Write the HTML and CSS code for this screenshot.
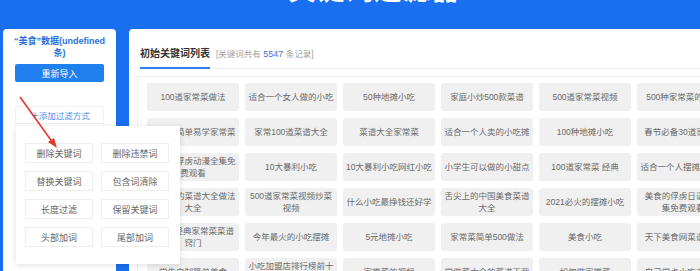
FILE: index.html
```html
<!DOCTYPE html>
<html lang="zh-CN">
<head>
<meta charset="utf-8">
<title>关键词过滤器</title>
<link rel="stylesheet" href="styles.css">
</head>
<body>
<header class="header">
  <h1 class="title">关键词过滤器</h1>
</header>
<main class="main">
  <aside class="side">
    <div class="data-name">“美食”数据(undefined<br>条)</div>
    <button class="btn-primary">重新导入</button>
    <div class="add-filter"><span class="plus">+</span> 添加过滤方式</div>
    <div class="menu">
      <div class="menu-item">删除关键词</div>
      <div class="menu-item">删除违禁词</div>
      <div class="menu-item">替换关键词</div>
      <div class="menu-item">包含词清除</div>
      <div class="menu-item">长度过滤</div>
      <div class="menu-item">保留关键词</div>
      <div class="menu-item">头部加词</div>
      <div class="menu-item">尾部加词</div>
    </div>
    <svg class="arrow" width="60" height="60" viewBox="0 0 60 60">
      <line x1="14" y1="0" x2="47" y2="46" stroke="#e8352b" stroke-width="1.6"/>
      <polygon points="51,51 42,45 48,41" fill="#e8352b"/>
    </svg>
  </aside>
  <section class="content">
    <div class="tabs">
      <div class="tab">初始关键词列表</div>
      <div class="count">[关键词共有 <span class="num">5547</span> 条记录]</div>
    </div>
    <div class="tag-box">
      <div class="tag">100道家常菜做法</div>
      <div class="tag">适合一个女人做的小吃</div>
      <div class="tag">50种地摊小吃</div>
      <div class="tag">家庭小炒500款菜谱</div>
      <div class="tag">500道家常菜视频</div>
      <div class="tag">500种家常菜的做法</div>

      <div class="tag">零基础简单易学家常菜</div>
      <div class="tag">家常100道菜谱大全</div>
      <div class="tag">菜谱大全家常菜</div>
      <div class="tag">适合一个人卖的小吃摊</div>
      <div class="tag">100种地摊小吃</div>
      <div class="tag">春节必备30道家常菜</div>

      <div class="tag">美食的俘虏动漫全集免<br>费观看</div>
      <div class="tag">10大暴利小吃</div>
      <div class="tag">10大暴利小吃网红小吃</div>
      <div class="tag">小学生可以做的小甜点</div>
      <div class="tag">100道家常菜 经典</div>
      <div class="tag">适合一个人摆摊的小吃</div>

      <div class="tag">家常菜的菜谱大全做法<br>大全</div>
      <div class="tag">500道家常菜视频炒菜<br>视频</div>
      <div class="tag">什么小吃最挣钱还好学</div>
      <div class="tag">舌尖上的中国美食菜谱<br>大全</div>
      <div class="tag">2021必火的摆摊小吃</div>
      <div class="tag">美食的俘虏日语版全<br>集免费观看</div>

      <div class="tag">100道经典家常菜菜谱<br>窍门</div>
      <div class="tag">今年最火的小吃摆摊</div>
      <div class="tag">5元地摊小吃</div>
      <div class="tag">家常菜简单500做法</div>
      <div class="tag">美食小吃</div>
      <div class="tag">天下美食网菜谱大全</div>

      <div class="tag">学生自制简单美食</div>
      <div class="tag">小吃加盟店排行榜前十<br>名</div>
      <div class="tag">家常菜的视频</div>
      <div class="tag">学做菜大全的菜谱下载</div>
      <div class="tag">如何做家常菜</div>
      <div class="tag">自己学点小吃去摆摊</div>
    </div>
  </section>
</main>
</body>
</html>
```
FILE: styles.css
```css
* { box-sizing: border-box; }
html, body { margin: 0; padding: 0; }
body {
  width: 700px;
  height: 271px;
  overflow: hidden;
  background: #186ff0;
  font-family: "Liberation Sans", "Noto Sans CJK SC", sans-serif;
}
.header {
  height: 29px;
  overflow: hidden;
}
.title {
  margin: -23px 0 0 288px;
  font-size: 28px;
  line-height: 28px;
  font-weight: 700;
  color: #fff;
  letter-spacing: 0.6px;
  white-space: nowrap;
}
.main {
  display: flex;
  align-items: flex-start;
  gap: 13px;
  padding-left: 3px;
  height: 242px;
  overflow: hidden;
}
.side {
  position: relative;
  width: 113px;
  height: 300px;
  flex: none;
  background: #fff;
  border-radius: 4px 4px 0 0;
  padding: 7px 12px 0;
}
.data-name {
  margin: 0 -8px;
  font-size: 9px;
  line-height: 11.5px;
  font-weight: 700;
  color: #2a6fe0;
  text-align: center;
  white-space: nowrap;
}
.btn-primary {
  display: block;
  width: 100%;
  height: 18px;
  margin-top: 5px;
  border: 0;
  border-radius: 2px;
  background: #2080f0;
  color: #fff;
  font-family: inherit;
  font-size: 9px;
  padding: 0;
}
.add-filter {
  margin-top: 24px;
  height: 18px;
  border: 1px solid #f1f1f1;
  color: #4a8cf0;
  font-size: 8.5px;
  display: flex;
  align-items: center;
  padding-left: 16px;
}
.plus { font-size: 10px; margin-right: 1px; }
.menu {
  position: absolute;
  left: 13px;
  top: 97px;
  width: 164px;
  height: 138px;
  background: #fff;
  box-shadow: 0 1px 6px rgba(0, 0, 0, 0.13);
  padding: 17px 0 0 9px;
  display: grid;
  grid-template-columns: 68px 68px;
  grid-auto-rows: 20px;
  column-gap: 8px;
  row-gap: 8px;
  align-content: start;
}
.menu-item {
  border: 1px solid #eeeeee;
  color: #666;
  font-size: 9px;
  display: flex;
  align-items: center;
  justify-content: center;
}
.arrow {
  position: absolute;
  left: 3px;
  top: 68px;
  overflow: visible;
}
.content {
  flex: 1;
  min-width: 0;
  height: 300px;
  background: #fff;
  border-radius: 4px 0 0 0;
  padding-left: 8px;
  overflow: hidden;
}
.tabs {
  display: flex;
  align-items: flex-end;
  height: 40px;
  border-bottom: 1px solid #eeeeee;
  padding-left: 3px;
}
.tab {
  height: 40px;
  padding-top: 13px;
  border-bottom: 2px solid #2a7ef0;
  margin-bottom: -1px;
  font-size: 10px;
  line-height: 24px;
  font-weight: 700;
  color: #333;
}
.count {
  align-self: flex-start;
  margin-top: 13px;
  line-height: 24px;
  margin-left: 6px;
  font-size: 8.5px;
  color: #a0a0a0;
}
.num { color: #3a72d8; font-size: 9px; }
.tag-box {
  margin-top: 7px;
  width: 640px;
  border: 1px solid #eeeeee;
  border-right: 0;
  padding: 6px 0 0 9px;
  display: grid;
  grid-template-columns: repeat(6, 92px);
  grid-auto-rows: 28px;
  column-gap: 6px;
  row-gap: 7px;
}
.tag {
  background: #f0f0f0;
  border-radius: 3px;
  color: #6a6a6a;
  font-size: 8.5px;
  line-height: 12px;
  display: flex;
  align-items: center;
  justify-content: center;
  text-align: center;
  white-space: nowrap;
  overflow: hidden;
}
```
